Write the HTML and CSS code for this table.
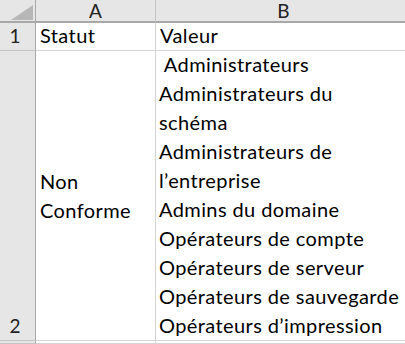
FILE: index.html
```html
<!DOCTYPE html>
<html lang="fr">
<head>
    <meta charset="UTF-8">
    <title>Statut - Valeur</title>
    <link rel="stylesheet" href="styles.css">
</head>
<body>
    <div class="sheet">
        <!-- column headers -->
        <div class="corner">
            <svg width="35" height="22" viewBox="0 0 35 22">
                <polygon points="11,20 33,20 33,5" fill="#b7b7b7"/>
            </svg>
        </div>
        <div class="col-head">A</div>
        <div class="col-head">B</div>

        <!-- row 1 -->
        <div class="row-head">1</div>
        <div class="cell">Statut</div>
        <div class="cell">Valeur</div>

        <!-- row 2 -->
        <div class="row-head">2</div>
        <div class="cell middle">Non<br>Conforme</div>
        <div class="cell wrap">&nbsp;Administrateurs<br>Administrateurs du<br>schéma<br>Administrateurs de<br>l’entreprise<br>Admins du domaine<br>Opérateurs de compte<br>Opérateurs de serveur<br>Opérateurs de sauvegarde<br>Opérateurs d’impression</div>

        <!-- row 3, cut off -->
        <div class="row-head"></div>
        <div class="cell"></div>
        <div class="cell"></div>
    </div>
</body>
</html>
```

FILE: styles.css
```css
body {
    margin: 0;
    background-color: #ffffff;
    font-family: Lato, "Liberation Sans", sans-serif;
    overflow: hidden;
}

.sheet {
    display: grid;
    grid-template-columns: 36px 120px 256px;
    grid-template-rows: 23px 28px 290px 3px;
    width: 412px;
}

.corner,
.col-head,
.row-head {
    background-color: #e6e6e6;
    color: #222222;
    box-sizing: border-box;
}

.corner {
    border-right: 1px solid #a8a8a8;
    border-bottom: 2px solid #a8a8a8;
}

.corner svg {
    display: block;
}

.col-head {
    display: flex;
    align-items: center;
    justify-content: center;
    font-size: 19px;
    border-right: 1px solid #c4c4c4;
    border-bottom: 2px solid #a8a8a8;
}

.row-head {
    display: flex;
    align-items: flex-end;
    justify-content: center;
    padding-right: 5px;
    font-size: 19px;
    line-height: 29px;
    border-right: 1px solid #a8a8a8;
    border-bottom: 1px solid #c4c4c4;
}

.cell {
    display: flex;
    align-items: flex-end;
    box-sizing: border-box;
    padding-left: 4px;
    font-size: 20px;
    letter-spacing: 0.4px;
    line-height: 29px;
    color: #000000;
    white-space: nowrap;
    border-right: 1px solid #d4d4d4;
    border-bottom: 1px solid #d4d4d4;
}

.cell.middle {
    align-items: center;
}

.cell.wrap {
    padding-left: 3px;
}
```
